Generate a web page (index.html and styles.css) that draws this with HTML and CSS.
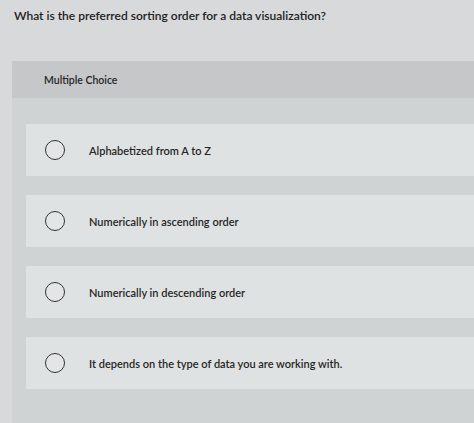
FILE: index.html
```html
<!DOCTYPE html>
<html>
<head>
<meta charset="utf-8">
<link rel="stylesheet" href="styles.css">
</head>
<body>
<div class="page">
  <div class="question">What is the preferred sorting order for a data visualization?</div>
  <div class="band"><span class="band-label">Multiple Choice</span></div>
  <div class="options">
    <div class="option"><span class="radio"></span><span class="label">Alphabetized from A to Z</span></div>
    <div class="option"><span class="radio"></span><span class="label">Numerically in ascending order</span></div>
    <div class="option"><span class="radio"></span><span class="label">Numerically in descending order</span></div>
    <div class="option"><span class="radio"></span><span class="label">It depends on the type of data you are working with.</span></div>
  </div>
</div>
</body>
</html>
```
FILE: styles.css
```css
html, body {
  margin: 0;
  padding: 0;
}
body {
  width: 474px;
  height: 423px;
  overflow: hidden;
  background: #d7d9db;
  font-family: Lato, "Open Sans", sans-serif;
  color: #262626;
}
.page {
  display: flex;
  flex-direction: column;
}
.question {
  height: 61px;
  box-sizing: border-box;
  padding: 8px 0 0 14px;
  font-size: 12px;
  line-height: 16px;
  font-weight: 600;
  color: #222;
}
.band {
  margin-left: 12px;
  height: 37px;
  background: #c5c7c9;
  display: flex;
  align-items: center;
  padding-left: 32px;
}
.band-label {
  font-size: 10.5px;
  font-weight: 600;
}
.options {
  margin-left: 12px;
  background: #d0d3d4;
  padding: 26px 0 40px 14px;
  display: flex;
  flex-direction: column;
  gap: 19px;
}
.option {
  height: 52px;
  background: #dfe2e2;
  display: flex;
  align-items: center;
  padding-left: 19px;
}
.radio {
  width: 18px;
  height: 18px;
  border: 1.4px solid #333;
  border-radius: 50%;
  background: #e3e6e6;
  flex: none;
}
.label {
  margin-left: 24px;
  font-size: 11px;
  font-weight: 600;
}
```
